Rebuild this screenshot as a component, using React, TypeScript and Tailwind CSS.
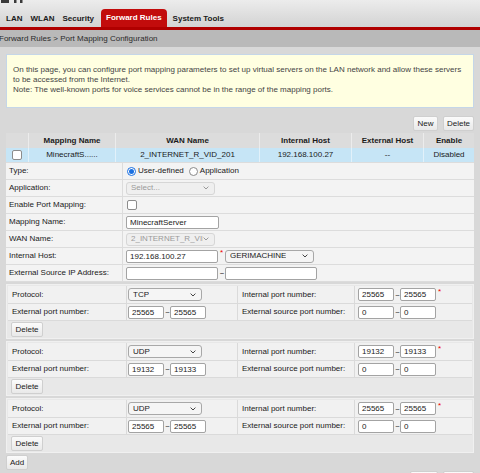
import React from 'react';

const Chevron = ({ muted }: { muted?: boolean }) => (
  <svg width="6" height="4" viewBox="0 0 6 4" className="shrink-0">
    <path d="M0.6 0.6 L3 3 L5.4 0.6" fill="none" stroke={muted ? '#9a9a9a' : '#444'} strokeWidth="1" />
  </svg>
);

// bottom edge of the product logo, cut off by the window
const LogoStub = () => (
  <svg width="24" height="4" viewBox="0 0 24 4" className="block">
    <rect x="0" y="0" width="8" height="3" fill="#3a3a3a" />
    <rect x="13" y="0" width="2.5" height="3" fill="#3a3a3a" />
    <rect x="19" y="0" width="2.5" height="3" fill="#3a3a3a" />
  </svg>
);

const Select = ({ value, className, disabled }: { value: string; className: string; disabled?: boolean }) => (
  <div
    className={`flex items-center justify-between h-[13px] rounded-[3px] border pl-[4px] pr-[5px] overflow-hidden ${
      disabled ? 'bg-[#efefef] border-[#d6d6d6] text-[#9a9a9a]' : 'bg-[#f5f5f5] border-[#a8a8a8] text-[#1a1a1a]'
    } ${className}`}
  >
    <span className="whitespace-nowrap overflow-hidden">{value}</span>
    <Chevron muted={disabled} />
  </div>
);

const Input = ({ value = '', className }: { value?: string; className: string }) => (
  <div className={`h-[13px] bg-white border border-[#a3a3a3] rounded-[2px] pl-[3px] leading-[11px] text-[#1a1a1a] ${className}`}>
    {value}
  </div>
);

const Dash = () => <span className="w-[6px] text-center text-[#333] leading-none tracking-[-1px]">--</span>;

const Range = ({ a, b, req }: { a: string; b: string; req?: boolean }) => (
  <div className="flex items-center">
    <Input value={a} className="w-[36px]" />
    <Dash />
    <Input value={b} className="w-[36px]" />
    {req && <span className="ml-[2px] text-[#e00] self-start leading-[8px]">*</span>}
  </div>
);

const Btn = ({ label, className = '' }: { label: string; className?: string }) => (
  <div
    className={`h-[15px] flex items-center justify-center rounded-[2px] border border-[#cfcfcf] bg-gradient-to-b from-[#fbfbfb] to-[#e9e9e9] text-[#1a1a1a] ${className}`}
  >
    {label}
  </div>
);

const Radio = ({ on }: { on?: boolean }) => (
  <span
    className={`w-[9px] h-[9px] rounded-full border flex items-center justify-center bg-white ${
      on ? 'border-[#1a6fe0]' : 'border-[#8a8a8a]'
    }`}
  >
    {on && <span className="w-[5px] h-[5px] rounded-full bg-[#1a6fe0]" />}
  </span>
);

const Check = () => <span className="w-[10px] h-[10px] rounded-[2px] border border-[#8c8c8c] bg-white" />;

const FormRow = ({ label, children }: { label: string; children?: React.ReactNode }) => (
  <div className="flex h-[17px] border-b border-[#dcdcdc] bg-[#f3f3f3]">
    <div className="w-[117px] shrink-0 pl-[3px] flex items-center border-r border-[#dcdcdc]">{label}</div>
    <div className="flex-1 flex items-center pl-[3px]">{children}</div>
  </div>
);

const PortGroup = ({ proto, ext, int }: { proto: string; ext: [string, string]; int: [string, string] }) => (
  <div className="bg-[#e8e8e8] border border-[#f0f0f0] px-[1px] pt-[1px] mb-[2px]">
    <div className="flex h-[18px] border-b border-[#dadada] bg-[#f1f1f1]">
      <div className="w-[119px] pl-[4px] flex items-center border-r border-[#dadada]">Protocol:</div>
      <div className="w-[111px] pl-[1px] flex items-center border-r border-[#dadada]">
        <Select value={proto} className="w-[74px]" />
      </div>
      <div className="w-[117px] pl-[4px] flex items-center border-r border-[#dadada]">Internal port number:</div>
      <div className="flex-1 pl-[3px] flex items-center">
        <Range a={int[0]} b={int[1]} req />
      </div>
    </div>
    <div className="flex h-[17px] border-b border-[#dadada] bg-[#f1f1f1]">
      <div className="w-[119px] pl-[4px] flex items-center border-r border-[#dadada]">External port number:</div>
      <div className="w-[111px] pl-[1px] flex items-center border-r border-[#dadada]">
        <Range a={ext[0]} b={ext[1]} />
      </div>
      <div className="w-[117px] pl-[4px] flex items-center border-r border-[#dadada]">External source port number:</div>
      <div className="flex-1 pl-[3px] flex items-center">
        <Range a="0" b="0" />
      </div>
    </div>
    <div className="h-[17px] flex items-center pl-[3px]">
      <Btn label="Delete" className="w-[32px]" />
    </div>
  </div>
);

export default function App() {
  const tabs = ['LAN', 'WLAN', 'Security'];
  return (
    <div className="w-[480px] h-[473px] overflow-hidden bg-[#d8d8d8] font-['Liberation_Sans',Arial,sans-serif] text-[8px] text-[#1a1a1a]">
      {/* top bar with tabs */}
      <div className="h-[27px] bg-gradient-to-b from-[#ececec] to-[#d3d3d3]">
        <div className="h-[9px] pl-[1px]">
          <LogoStub />
        </div>
        <div className="h-[18px] flex items-end pl-[6px]">
          {tabs.map((t, i) => (
            <span key={t} className={`font-bold h-[17px] leading-[18px] ${i > 0 ? 'ml-[8px]' : ''}`}>
              {t}
            </span>
          ))}
          <span className="ml-[7px] h-[18px] leading-[18px] px-[5px] rounded-t-[4px] bg-[#c20c0c] text-white font-bold">
            Forward Rules
          </span>
          <span className="ml-[6px] font-bold h-[17px] leading-[18px]">System Tools</span>
        </div>
      </div>
      <div className="h-[3px] bg-[#b00000]" />
      <div className="h-[17px] bg-[#b9b9b9] leading-[17px] text-[#2a2a2a] -ml-[1px]">
        Forward Rules &gt; Port Mapping Configuration
      </div>

      <div className="px-[6px] pt-[7px]">
        {/* notice */}
        <div className="h-[54px] bg-[#ffffe1] border border-[#c5d6e8] pl-[6px] pt-[10px] leading-[10px] text-[#444] whitespace-nowrap">
          On this page, you can configure port mapping parameters to set up virtual servers on the LAN network and allow these servers
          <br />
          to be accessed from the Internet.
          <br />
          Note: The well-known ports for voice services cannot be in the range of the mapping ports.
        </div>

        <div className="mt-[8px] flex justify-end gap-[5px]">
          <Btn label="New" className="w-[25px]" />
          <Btn label="Delete" className="w-[31px]" />
        </div>

        {/* mapping list */}
        <div className="mt-[2px]">
          <div className="flex h-[15px] bg-[#dcdcdc] font-bold">
            <div className="w-[23px] border-r border-[#ececec]" />
            <div className="w-[87px] border-r border-[#ececec] flex items-center justify-center">Mapping Name</div>
            <div className="w-[144px] border-r border-[#ececec] flex items-center justify-center">WAN Name</div>
            <div className="w-[92px] border-r border-[#ececec] flex items-center justify-center">Internal Host</div>
            <div className="w-[72px] border-r border-[#ececec] flex items-center justify-center">External Host</div>
            <div className="flex-1 flex items-center justify-center">Enable</div>
          </div>
          <div className="flex h-[15px] bg-[#c6e5f6] border-b border-[#dcdcdc]">
            <div className="w-[23px] border-r border-[#e2f1fa] flex items-center justify-center">
              <Check />
            </div>
            <div className="w-[87px] border-r border-[#e2f1fa] flex items-center justify-center">MinecraftS......</div>
            <div className="w-[144px] border-r border-[#e2f1fa] flex items-center justify-center">2_INTERNET_R_VID_201</div>
            <div className="w-[92px] border-r border-[#e2f1fa] flex items-center justify-center">192.168.100.27</div>
            <div className="w-[72px] border-r border-[#e2f1fa] flex items-center justify-center">--</div>
            <div className="flex-1 flex items-center justify-center">Disabled</div>
          </div>

          <FormRow label="Type:">
            <span className="ml-[1px] flex items-center gap-[2px]">
              <Radio on />
              <span>User-defined</span>
            </span>
            <span className="ml-[5px] flex items-center gap-[2px]">
              <Radio />
              <span>Application</span>
            </span>
          </FormRow>
          <FormRow label="Application:">
            <Select value="Select..." className="w-[89px]" disabled />
          </FormRow>
          <FormRow label="Enable Port Mapping:">
            <span className="ml-[1px] flex">
              <Check />
            </span>
          </FormRow>
          <FormRow label="Mapping Name:">
            <Input value="MinecraftServer" className="w-[93px]" />
          </FormRow>
          <FormRow label="WAN Name:">
            <Select value="2_INTERNET_R_VID_201" className="w-[89px]" disabled />
          </FormRow>
          <FormRow label="Internal Host:">
            <Input value="192.168.100.27" className="w-[92px]" />
            <span className="w-[7px] pl-[2px] text-[#e00] self-start leading-[10px]">*</span>
            <Select value="GERIMACHINE" className="w-[89px]" />
          </FormRow>
          <FormRow label="External Source IP Address:">
            <Input className="w-[92px]" />
            <span className="w-[7px] text-center leading-none tracking-[-1px]">--</span>
            <Input className="w-[92px]" />
          </FormRow>
        </div>

        {/* port ranges */}
        <div className="mt-[2px]">
          <PortGroup proto="TCP" ext={['25565', '25565']} int={['25565', '25565']} />
          <PortGroup proto="UDP" ext={['19132', '19133']} int={['19132', '19133']} />
          <PortGroup proto="UDP" ext={['25565', '25565']} int={['25565', '25565']} />
        </div>

        <div className="mt-[1px] flex">
          <Btn label="Add" className="w-[22px]" />
        </div>
        <div className="mt-[1px] flex justify-end gap-[5px]">
          <Btn label="Apply" className="w-[28px]" />
          <Btn label="Cancel" className="w-[31px]" />
        </div>
      </div>
    </div>
  );
}
